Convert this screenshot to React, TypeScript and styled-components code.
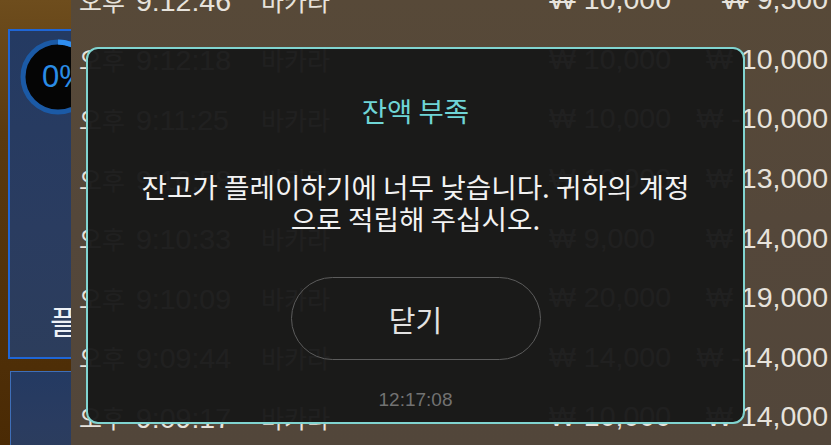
import React from "react";
import styled, { createGlobalStyle } from "styled-components";

const Global = createGlobalStyle`
  html, body { margin: 0; padding: 0; background: #4a2a06; }
  body { width: 831px; height: 445px; overflow: hidden; }
  #root { width: 831px; height: 445px; }
`;

const Screen = styled.div`
  position: relative;
  width: 831px;
  height: 445px;
  display: flex;
  overflow: hidden;
  font-family: "Liberation Sans", "Noto Sans CJK KR", sans-serif;
`;

const Side = styled.div`
  width: 71px;
  flex: none;
  display: flex;
  flex-direction: column;
  padding-top: 29px;
  gap: 12px;
  overflow: hidden;
  background: linear-gradient(180deg, #6e4d1d 0%, #5a3a10 30%, #4a2a04 100%);
`;

const Card = styled.div<{ $h: number; $inset: number; $bright?: boolean }>`
  position: relative;
  margin-left: ${(p) => p.$inset}px;
  width: 90px;
  height: ${(p) => p.$h}px;
  flex: none;
  box-sizing: border-box;
  border: ${(p) => (p.$bright ? "2px solid #1f66d6" : "1px solid #3f6fb8")};
  background: linear-gradient(180deg, #243a62 0%, #2a3c60 60%, #2c3d5c 100%);
  display: flex;
  flex-direction: column;
  align-items: flex-start;
`;

const Ring = styled.div`
  position: relative;
  margin: 6px 0 0 8px;
  width: 80px;
  height: 80px;
  flex: none;
`;

const RingLabel = styled.span`
  position: absolute;
  left: 24px;
  top: 0;
  height: 80px;
  display: flex;
  align-items: center;
  font-family: "Liberation Sans", sans-serif;
  font-size: 31px;
  color: #2a8ce6;
`;

const SideLabel = styled.div`
  margin-top: auto;
  margin-bottom: 17px;
  padding-left: 40px;
  font-family: "Noto Sans CJK KR", sans-serif;
  font-size: 32px;
  line-height: 40px;
  color: #eef1f6;
  white-space: nowrap;
`;

const Table = styled.div`
  flex: 1;
  overflow: hidden;
  background: linear-gradient(180deg, #574938 0%, #54473a 50%, #52463a 100%);
`;

const Rows = styled.div`
  margin-top: -30px;
`;

const Row = styled.div`
  height: 59.6px;
  display: grid;
  grid-template-columns: 182px 288px 1fr auto;
  align-items: center;
  padding: 0 3px 0 8px;
  font-size: 28.5px;
  color: #e7e3dc;
  white-space: nowrap;
`;

const Cell = styled.span<{ $right?: boolean }>`
  text-align: ${(p) => (p.$right ? "right" : "left")};
`;

const Ko = styled.span`
  font-family: "Noto Sans CJK KR", sans-serif;
  font-size: 25px;
  margin-right: 3px;
`;

const Overlay = styled.div`
  position: absolute;
  inset: 0;
  display: flex;
  justify-content: center;
  align-items: flex-start;
  padding-top: 47px;
`;

const Dialog = styled.div`
  width: 659px;
  height: 377px;
  box-sizing: border-box;
  border: 2px solid #80d4d0;
  border-radius: 12px;
  background: rgba(24, 24, 24, 0.96);
  display: flex;
  flex-direction: column;
  align-items: center;
  font-family: "Noto Sans CJK KR", sans-serif;
`;

const Title = styled.div`
  margin-top: 45px;
  font-size: 27.5px;
  line-height: 32px;
  color: #6fd5d6;
`;

const Message = styled.div`
  margin-top: 44px;
  font-size: 27.7px;
  line-height: 32px;
  color: #f2f2f2;
  text-align: center;
  white-space: nowrap;
`;

const CloseButton = styled.button`
  margin-top: 43px;
  width: 250px;
  height: 83px;
  flex: none;
  box-sizing: border-box;
  border: 1.5px solid #5c5c5c;
  border-radius: 42px;
  background: transparent;
  color: #e2e2e2;
  font-family: "Noto Sans CJK KR", sans-serif;
  font-size: 29px;
  cursor: pointer;
`;

const Stamp = styled.div`
  margin-top: 28px;
  font-family: "Liberation Sans", sans-serif;
  font-size: 19px;
  line-height: 24px;
  color: #727272;
`;

const rows = [
  ["9:12:46", "₩ 10,000", "₩ 9,500"],
  ["9:12:18", "₩ 10,000", "₩ 10,000"],
  ["9:11:25", "₩ 10,000", "₩ -10,000"],
  ["9:10:58", "₩ 10,000", "₩ 13,000"],
  ["9:10:33", "₩ 9,000", "₩ 14,000"],
  ["9:10:09", "₩ 20,000", "₩ 19,000"],
  ["9:09:44", "₩ 14,000", "₩ -14,000"],
  ["9:09:17", "₩ 10,000", "₩ 14,000"],
  ["9:08:52", "₩ 10,000", "₩ 10,000"],
];

export default function App() {
  return (
    <>
      <Global />
      <Screen>
        <Side>
          <Card $h={330} $inset={8} $bright>
            <Ring>
              <svg width="80" height="80" viewBox="0 0 80 80">
                <circle cx="40" cy="40" r="36" fill="#050505" />
                <circle cx="40" cy="40" r="35" fill="none" stroke="#1b5aa6" strokeWidth="5" />
                <path d="M40 5 A35 35 0 0 1 62 13" fill="none" stroke="#2f8ef0" strokeWidth="5" />
              </svg>
              <RingLabel>0%</RingLabel>
            </Ring>
            <SideLabel>플레이</SideLabel>
          </Card>
          <Card $h={90} $inset={10} />
        </Side>
        <Table>
          <Rows>
            {rows.map(([t, bet, res]) => (
              <Row key={t}>
                <Cell>
                  <Ko>오후</Ko> {t}
                </Cell>
                <Cell>
                  <Ko>바카라</Ko>
                </Cell>
                <Cell>{bet}</Cell>
                <Cell $right>{res}</Cell>
              </Row>
            ))}
          </Rows>
        </Table>
        <Overlay>
          <Dialog role="dialog">
            <Title>잔액 부족</Title>
            <Message>
              잔고가 플레이하기에 너무 낮습니다. 귀하의 계정
              <br />
              으로 적립해 주십시오.
            </Message>
            <CloseButton>닫기</CloseButton>
            <Stamp>12:17:08</Stamp>
          </Dialog>
        </Overlay>
      </Screen>
    </>
  );
}
